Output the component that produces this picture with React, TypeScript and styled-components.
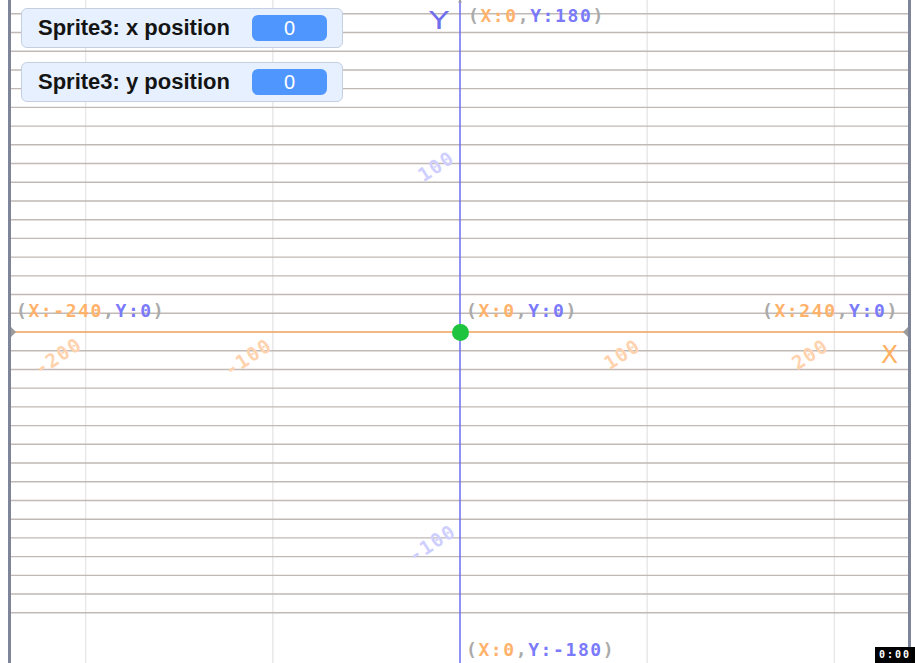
import React from "react";
import styled, { createGlobalStyle } from "styled-components";

const GlobalStyle = createGlobalStyle`
  html, body {
    margin: 0;
    padding: 0;
    background: #ffffff;
    overflow: hidden;
  }
  body {
    font-family: "Liberation Sans", Arial, sans-serif;
  }
`;

// stage geometry, in stage pixels (origin = inner left edge of the stage)
const STAGE_W = 897;
const STAGE_H = 663;
const CX = 449;
const CY = 332;
const UNIT = 1.8718;

const Stage = styled.div`
  position: relative;
  width: ${STAGE_W}px;
  height: ${STAGE_H}px;
  margin-left: 8px;
  border-left: 3px solid #7f8599;
  border-right: 3px solid #7f8599;
  background: #ffffff;
  overflow: hidden;
`;

const Backdrop = styled.svg`
  display: block;

  .coord {
    font-family: "DejaVu Sans Mono", "Liberation Mono", monospace;
    font-weight: 700;
    font-size: 18px;
    letter-spacing: 1.6px;
    fill: #aaaaaa;
  }
  .coord .xs {
    fill: #ffb26b;
  }
  .coord .ys {
    fill: #7a7afa;
  }
  .tick {
    font-family: "DejaVu Sans Mono", "Liberation Mono", monospace;
    font-weight: 700;
    font-size: 19px;
    letter-spacing: 1.6px;
  }
  .tick-x {
    fill: #ffd2ae;
  }
  .tick-y {
    fill: #cfcfff;
  }
  .axis {
    font-family: "DejaVu Sans", "Liberation Sans", sans-serif;
    font-size: 25px;
  }
`;

const Sprite = styled.div`
  position: absolute;
  left: ${CX - 8.5}px;
  top: ${CY - 8.5}px;
  width: 17px;
  height: 17px;
  border-radius: 50%;
  background: #1ec43d;
`;

const MonitorStack = styled.div`
  position: absolute;
  left: 10px;
  top: 8px;
  display: flex;
  flex-direction: column;
  gap: 14px;
`;

const Monitor = styled.div`
  box-sizing: border-box;
  width: 322px;
  height: 40px;
  display: flex;
  align-items: center;
  justify-content: space-between;
  padding: 0 15px 0 16px;
  background: #e6f0ff;
  border: 1px solid #c4d0e2;
  border-radius: 6px;
`;

const MonitorLabel = styled.span`
  font-family: "Liberation Sans", Arial, sans-serif;
  font-weight: 700;
  font-size: 22px;
  color: #141414;
  white-space: nowrap;
`;

const MonitorValue = styled.span`
  width: 75px;
  height: 26px;
  border-radius: 6px;
  background: #4f97ff;
  color: #ffffff;
  font-family: "Liberation Sans", Arial, sans-serif;
  font-size: 20px;
  line-height: 26px;
  text-align: center;
`;

const Timer = styled.div`
  position: fixed;
  right: 0;
  bottom: 0;
  width: 40px;
  height: 16px;
  background: #000000;
  color: #ffffff;
  font-family: "DejaVu Sans Mono", "Liberation Mono", monospace;
  font-weight: 700;
  font-size: 10px;
  line-height: 16px;
  letter-spacing: 2px;
  text-align: center;
`;

const coordLabels = [
  { x: 457, y: 21.5, xs: "X:0", ys: "Y:180" },
  { x: 5, y: 316.5, xs: "X:-240", ys: "Y:0" },
  { x: 455, y: 316.5, xs: "X:0", ys: "Y:0" },
  { x: 751, y: 316.5, xs: "X:240", ys: "Y:0" },
  { x: 455, y: 655.5, xs: "X:0", ys: "Y:-180" },
];

const ticks: { x: number; y: number; text: string; axis: "x" | "y" }[] = [
  { x: 47, y: 356, text: "-200", axis: "x" },
  { x: 237, y: 357, text: "-100", axis: "x" },
  { x: 611, y: 354, text: "100", axis: "x" },
  { x: 799, y: 354, text: "200", axis: "x" },
  { x: 425, y: 166, text: "100", axis: "y" },
  { x: 421, y: 543, text: "-100", axis: "y" },
];

const monitors = [
  { label: "Sprite3: x position", value: 0 },
  { label: "Sprite3: y position", value: 0 },
];

const rows = Array.from({ length: 33 }, (_, i) => i - 17).filter((k) => k !== 0);
const cols = [-200, -100, 100, 200];

// the xy-grid backdrop: grid, axes and their printed coordinates
const GridBackdrop = () => (
  <Backdrop width={STAGE_W} height={STAGE_H} viewBox={`0 0 ${STAGE_W} ${STAGE_H}`}>
    {cols.map((c) => {
      const x = CX + c * UNIT;
      return <line key={c} x1={x} y1={0} x2={x} y2={STAGE_H} stroke="#e9e9e9" strokeWidth={1.5} />;
    })}
    {rows.map((k) => {
      const y = CY + k * 10 * UNIT;
      return <line key={k} x1={0} y1={y} x2={STAGE_W} y2={y} stroke="#c1b9b5" strokeWidth={1.4} />;
    })}
    <line x1={0} y1={CY} x2={STAGE_W} y2={CY} stroke="#f0a15c" strokeWidth={1.3} />
    <line x1={CX} y1={0} x2={CX} y2={STAGE_H} stroke="#6c6cf0" strokeWidth={1.5} />
    <path d={`M0 ${CY - 5} L5 ${CY} L0 ${CY + 5} Z`} fill="#9c9c9c" />
    <path d={`M${STAGE_W} ${CY - 5} L${STAGE_W - 5} ${CY} L${STAGE_W} ${CY + 5} Z`} fill="#9c9c9c" />
    <path d={`M${CX - 2} 2.5 L${CX} -1 L${CX + 2} 2.5 Z`} fill="#9c9c9c" />

    {ticks.map((t) => (
      <text
        key={`${t.axis}${t.text}`}
        className={`tick tick-${t.axis}`}
        x={t.x}
        y={t.y}
        textAnchor="middle"
        dominantBaseline="central"
        transform={`rotate(-33 ${t.x} ${t.y})`}
      >
        {t.text}
      </text>
    ))}

    {coordLabels.map((l) => (
      <text key={l.xs + l.ys} className="coord" x={l.x} y={l.y}>
        (<tspan className="xs">{l.xs}</tspan>,<tspan className="ys">{l.ys}</tspan>)
      </text>
    ))}

    <text className="axis" x={418} y={29} fill="#6f6fee" textLength={20} lengthAdjust="spacingAndGlyphs">
      Y
    </text>
    <text className="axis" x={870} y={363} fill="#ffb062">
      X
    </text>
  </Backdrop>
);

export default function App() {
  return (
    <>
      <GlobalStyle />
      <Stage>
        <GridBackdrop />
        <Sprite />
        <MonitorStack>
          {monitors.map((m) => (
            <Monitor key={m.label}>
              <MonitorLabel>{m.label}</MonitorLabel>
              <MonitorValue>{m.value}</MonitorValue>
            </Monitor>
          ))}
        </MonitorStack>
      </Stage>
      <Timer>0:00</Timer>
    </>
  );
}
